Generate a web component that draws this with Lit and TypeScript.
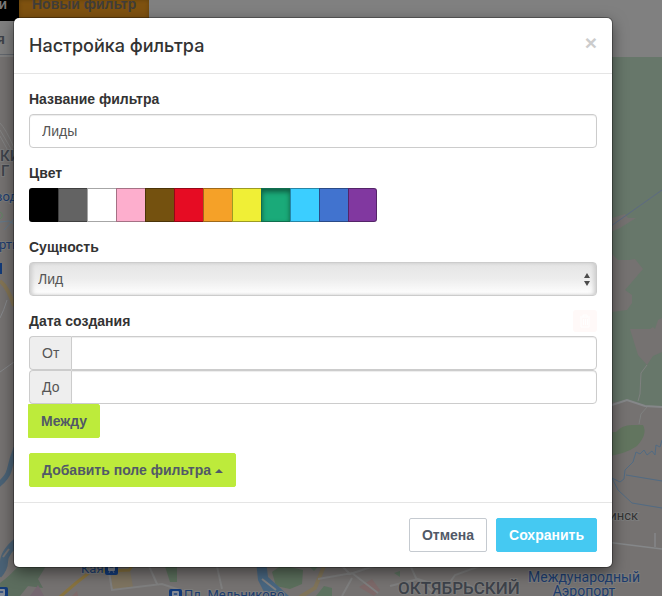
import { LitElement, html, css, svg } from "lit";
import { customElement, state } from "lit/decorators.js";

@customElement("map-backdrop")
class MapBackdrop extends LitElement {
  static styles = css`
    :host { display: block; position: absolute; inset: 0; overflow: hidden; background: #757271; }
    svg { display: block; width: 100%; height: 100%; }
    .label { font-family: Roboto, sans-serif; font-size: 13px; paint-order: stroke; stroke: #7c7c7c; stroke-width: 2px; }
    .place { fill: #1c3c6e; }
    .town { fill: #333333; }
    .district { fill: #3d424a; font-weight: 500; font-size: 15px; }
    .large { font-size: 17px; }
    .airport { font-size: 14px; }
  `;

  private station(x: number, y: number) {
    return svg`<g transform="translate(${x} ${y})">
      <rect width="13" height="13" rx="2" fill="#123a78" />
      <rect x="3" y="2" width="7" height="7" rx="1" fill="#858b96" />
      <path d="M4.500 4h4v2h-4zM4 11l1-2M9 11l-1-2" fill="#123a78" stroke="#858b96" stroke-width=".7" />
    </g>`;
  }

  render() {
    return html`<svg viewBox="0 0 662 596" preserveAspectRatio="xMinYMin slice" aria-hidden="true">
      <path d="M560 57H662V407L645 406L627 400L560 412Z" fill="#67776a" />
      <g fill="#757271">
        <path d="M600 226L612 218L625 214L628 218L636 218L620 228L600 237Z" />
        <path d="M600 250L612 254L618 260L629 260L635 259L643 269L625 290L632 295V303L627 310L612 312H600Z" />
        <path d="M630 329H650L653 327L655 329L658 320L662 318V352L653 356L647 365L638 355Z" />
      </g>
      <path d="M604 432H616Q622 425 632 425H643Q648 434 637 446Q626 454 604 457Z" fill="#62755f" />
      <g fill="none" stroke="#858789">
        <path d="M600 406L612 405L627 400L645 406L662 407" stroke-width="2" />
        <path d="M647 365L641 373L640 394L638 401M647 407L641 414L639 424" stroke="#7f8180" />
        <path d="M606 542L662 549M655 533V547" stroke-width="1.500" />
      </g>
      <g fill="none" stroke="#516b83">
        <path d="M604 231L662 190" stroke="#5c6a82" />
        <path d="M604 471L612 478L620 482L624 479L625 470L633 462L636 452L640 454L644 450L647 455L652 451L655 455L656 445L660 447L662 440" />
        <path d="M612 478L618 490L632 503L662 508M626 475L662 481" />
      </g>

      <g fill="none">
        <path d="M0 123Q6 129 14 148M0 130L14 154M0 136L12 158" stroke="#818181" />
        <path d="M0 222L9 221L14 224M4 230L14 219" stroke="#62788a" />
        <path d="M0 212Q5 215 0 219" stroke="#5f8562" />
        <path d="M0 281Q8 287 14 306" stroke="#837454" stroke-width="4" />
        <path d="M0 318Q4 310 7 300M0 372L14 362" stroke="#85878a" />
        <path d="M16 448Q12 458 9 471Q7 478 -3 486" stroke="#4a6276" stroke-width="5" />
        <path d="M19 540Q4 552 4 562Q4 568 -2 575" stroke="#4a6276" stroke-width="8" />
        <path d="M9 549L3 557" stroke="#757271" stroke-width="2" />
      </g>
      <path d="M0 583Q11 575 22 562L46 566L38 579L43 588L28 586L20 596H0Z" fill="#5c6d5e" />
      <path d="M38 585L30 596H44Z" fill="#756770" />
      <path d="M112 570H130L133 587L111 590Z" fill="#7e7460" />
      <path d="M163 560H177V582L170 582ZM272 572L282 565L303 570L302 584L290 589L276 586Z" fill="#5b6f5c" />
      <path d="M359 587L372 579L380 590L374 596ZM72 596L77 591L78 596Z" fill="#7d6969" />
      <path d="M256 560H266L268 577L289 596H266L258 580Z" fill="#486680" />
      <path d="M303 560H324L314 571ZM316 596L324 586L332 588V596ZM394 573L400 571V577Z" fill="#5d7260" />
      <g fill="none">
        <path d="M60 597L76 583L90 572L129 570L134 563" stroke="#88733f" stroke-width="3" />
        <path d="M300 597L315 588L324 566" stroke="#807459" stroke-width="4" />
        <path d="M109 572L112 590L162 584L198 596M149 566L157 584M216 562L222 589M318 579L352 573L378 593M340 564L350 574L380 564M352 578L342 596M410 565L416 578L438 596M390 586L418 579L446 588L455 575L480 566M466 584L486 594M262 579L276 590" stroke="#7f7f7f" stroke-width="2" />
      </g>

      <text class="label district" x="0" y="161">КИЙ</text>
      <text class="label district" x="1" y="176">Г</text>
      <text class="label place" x="-5" y="201">вод</text>
      <text class="label place" x="-1" y="249">рты</text>
      <rect y="263" width="2" height="11" fill="#123a78" />
      <text class="label place" x="81" y="573">Кая</text>
      ${this.station(105, 562)} ${this.station(-5, 587)} ${this.station(169, 589)}
      <text class="label place" x="184" y="599">Пл. Мельниково</text>
      <text class="label district large" x="398" y="594">ОКТЯБРЬСКИЙ</text>
      <text class="label place airport" x="584" y="582" text-anchor="middle">Международный</text>
      <text class="label place airport" x="584" y="596" text-anchor="middle">Аэропорт</text>
      <text class="label town" x="638" y="520" text-anchor="end">Дзержинск</text>
    </svg>`;
  }
}

@customElement("app-root")
class AppRoot extends LitElement {
  @state() private color = "#1aaa79";

  private colors: [string, string][] = [
    ["Чёрный", "#000000"], ["Серый", "#636363"], ["Белый", "#ffffff"], ["Розовый", "#fdaecd"],
    ["Коричневый", "#74510f"], ["Красный", "#e60c23"], ["Оранжевый", "#f5a128"], ["Жёлтый", "#f0ef36"],
    ["Зелёный", "#1aaa79"], ["Голубой", "#3bceff"], ["Синий", "#4173cf"], ["Фиолетовый", "#8138a0"],
  ];

  static styles = css`
    :host {
      display: block; position: relative; min-height: 100vh; overflow: hidden;
      font: 14px/20px "Liberation Sans", Arial, sans-serif; color: #555555;
    }
    * { box-sizing: border-box; }
    button, input, select { font: inherit; color: inherit; margin: 0; }
    .page { position: absolute; inset: 0; }
    .top { position: relative; height: 57px; background: #808080; overflow: hidden; }
    .tabs { display: flex; height: 21px; }
    .tab { border: 0; padding: 0 13px 12px; font-weight: bold; line-height: 9px; white-space: nowrap; }
    .tab-dark { width: 19px; padding: 0 12px 12px 0; background: #000000; color: #777777; display: flex; justify-content: flex-end; }
    .tab-new { background: #7f5210; color: #403d39; box-shadow: inset 0 0 4px #60400c; }
    .sub { display: block; width: 5px; height: 33px; line-height: 36px; font-weight: bold; color: #3d4047; direction: rtl; }
    .rule { width: 148px; height: 1px; background: #62676d; }

    .dialog {
      position: relative; margin: 18px 50px 29px 14px; background: #ffffff; border-radius: 5px;
      box-shadow: 0 0 0 1px rgba(0, 0, 0, .3), 0 5px 15px rgba(0, 0, 0, .5);
    }
    .header { display: flex; align-items: flex-start; justify-content: space-between; padding: 15px; border-bottom: 1px solid #e5e5e5; }
    .title { margin: 0; font-family: Inter, "Liberation Sans", sans-serif; font-size: 18px; line-height: 25px; font-weight: 500; color: #333333; }
    .close { border: 0; padding: 0; background: none; font-size: 21px; line-height: 20px; height: 20px; font-weight: bold; color: #cccccc; }
    .body { display: flex; flex-direction: column; gap: 15px; padding: 15px; }
    .field { display: flex; flex-direction: column; gap: 5px; border: 0; margin: 0; padding: 0; min-width: 0; }
    .caption { padding: 0; font-weight: bold; color: #333333; }
    .input {
      width: 100%; min-width: 0; height: 34px; padding: 6px 12px; border: 1px solid #cccccc; border-radius: 4px;
      background: #ffffff; box-shadow: inset 0 1px 1px rgba(0, 0, 0, .075);
    }
    .swatches { display: flex; }
    .swatch {
      appearance: none; width: 29px; height: 34px; border: 1px solid rgba(0, 0, 0, .35); border-right-width: 0;
      background: var(--tone);
    }
    .swatch:first-child { border-radius: 3px 0 0 3px; }
    .swatch:last-child { border-right-width: 1px; border-radius: 0 3px 3px 0; }
    .swatch:checked { box-shadow: inset 0 3px 5px rgba(0, 0, 0, .45); }
    .picker { position: relative; display: block; }
    .select {
      appearance: none; display: block; width: 100%; height: 34px; padding: 6px 8px; border: 1px solid #cccccc; border-radius: 4px;
      background: linear-gradient(#e4e4e4, #ededed 50%, #ffffff);
      box-shadow: inset 3px 0 4px -1px #cccccc, inset -3px 0 4px -1px #cccccc;
    }
    .arrows { position: absolute; right: 7px; top: 11px; pointer-events: none; }
    .row { display: flex; align-items: center; justify-content: space-between; height: 20px; }
    .trash { display: flex; justify-content: center; align-items: center; width: 24px; height: 22px; padding: 0; border: 0; border-radius: 3px; background: #fff9f8; }
    .range { display: flex; flex-direction: column; align-items: flex-start; }
    .group { display: flex; align-self: stretch; }
    .addon { padding: 6px 12px; border: 1px solid #cccccc; border-right: 0; border-radius: 4px 0 0 4px; background: #eeeeee; }
    .group .input { flex: 1; border-radius: 0 4px 4px 0; }
    .btn { height: 34px; padding: 6px 12px; border: 1px solid transparent; border-radius: 2px; font-weight: bold; white-space: nowrap; }
    .lime { align-self: flex-start; background: #bdeb3b; border-color: #bdeb3b; color: #515967; }
    .between { margin-left: -1px; border-radius: 0 2px 2px 0; }
    .caret { display: inline-block; border: 4px solid transparent; border-top: 0; border-bottom-color: currentColor; vertical-align: middle; }
    .footer { display: flex; justify-content: flex-end; gap: 9px; padding: 15px; border-top: 1px solid #e5e5e5; }
    .cancel { background: #ffffff; border-color: #c5cad0; color: #515967; }
    .save { background: #45c9f2; border-color: #45c9f2; color: #ffffff; }
  `;

  render() {
    return html`
      <div class="page">
        <map-backdrop></map-backdrop>
        <div class="top">
          <div class="tabs">
            <button class="tab tab-dark">и</button>
            <button class="tab tab-new">Новый фильтр</button>
          </div>
          <span class="sub">я</span>
          <div class="rule"></div>
        </div>
      </div>
      <form class="dialog" role="dialog" aria-labelledby="title" @submit=${(e: Event) => e.preventDefault()}>
        <header class="header">
          <h4 class="title" id="title">Настройка фильтра</h4>
          <button class="close" type="button" aria-label="Закрыть">×</button>
        </header>
        <div class="body">
          <div class="field">
            <label class="caption" for="name">Название фильтра</label>
            <input class="input" id="name" type="text" value="Лиды" />
          </div>
          <div class="field" role="radiogroup" aria-labelledby="color">
            <span class="caption" id="color">Цвет</span>
            <div class="swatches">
              ${this.colors.map(([name, tone]) => html`<input class="swatch" type="radio" name="color" aria-label=${name}
                style="--tone:${tone}" .checked=${this.color === tone} @change=${() => (this.color = tone)} />`)}
            </div>
          </div>
          <div class="field">
            <label class="caption" for="entity">Сущность</label>
            <span class="picker">
              <select class="select" id="entity"><option>Лид</option></select>
              <svg class="arrows" width="6" height="13" viewBox="0 0 6 13" aria-hidden="true">
                <path d="M3 0L6 5H0ZM3 13L0 8H6Z" fill="#4c4c4c" />
              </svg>
            </span>
          </div>
          <div class="field" role="group" aria-labelledby="created">
            <div class="row">
              <span class="caption" id="created">Дата создания</span>
              <button class="trash" type="button" aria-label="Удалить">
                <svg width="12" height="14" viewBox="0 0 12 14" fill="none" stroke="#ffffff" aria-hidden="true">
                  <path d="M1 3H11M4 3V1H8V3M2 4V13H10V4M4.500 5V11M6.500 5V11M8.500 5V11" />
                </svg>
              </button>
            </div>
            <div class="range">
              <div class="group"><label class="addon" for="from">От</label><input class="input" id="from" type="text" /></div>
              <div class="group"><label class="addon" for="to">До</label><input class="input" id="to" type="text" /></div>
              <button class="btn lime between" type="button">Между</button>
            </div>
          </div>
          <button class="btn lime" type="button">Добавить поле фильтра <span class="caret"></span></button>
        </div>
        <footer class="footer">
          <button class="btn cancel" type="button">Отмена</button>
          <button class="btn save" type="submit">Сохранить</button>
        </footer>
      </form>
    `;
  }
}
